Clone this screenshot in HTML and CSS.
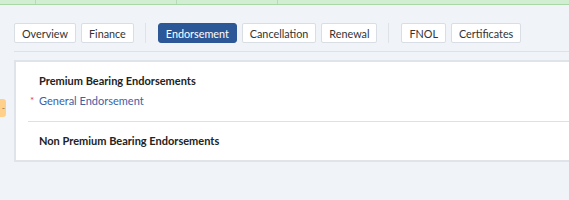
FILE: index.html
```html
<!DOCTYPE html>
<html>
<head>
<meta charset="utf-8">
<link rel="stylesheet" href="styles.css">
</head>
<body>
<div class="topstrip">
  <div class="cell c1"></div>
  <div class="cell c2"></div>
  <div class="cell c3"></div>
  <div class="cell c4"></div>
</div>
<div class="tabs">
  <button class="tab">Overview</button>
  <button class="tab">Finance</button>
  <span class="sep"></span>
  <button class="tab active">Endorsement</button>
  <button class="tab">Cancellation</button>
  <button class="tab">Renewal</button>
  <span class="sep"></span>
  <button class="tab">FNOL</button>
  <button class="tab">Certificates</button>
</div>
<div class="side-tab"><span>-</span></div>
<div class="card">
  <div class="section first">
    <div class="heading">Premium Bearing Endorsements</div>
    <div class="item"><span class="req">*</span><a class="link">General Endorsement</a></div>
  </div>
  <div class="section second">
    <div class="heading">Non Premium Bearing Endorsements</div>
  </div>
</div>
</body>
</html>
```
FILE: styles.css
```css
html, body {
  margin: 0;
  padding: 0;
  background: #f0f4f8;
  overflow: hidden;
  font-family: "Lato", "Noto Sans", sans-serif;
  font-size: 11px;
  color: #2a2a2a;
}
.topstrip {
  display: flex;
  height: 4px;
  background: #d2eed2;
  border-bottom: 1px solid #a8d8a8;
}
.cell { height: 4px; border-right: 1px solid #b5dcb5; }
.c1 { width: 35px; }
.c2 { width: 140px; }
.c3 { width: 100px; }
.c4 { flex: 1; border-right: none; }
.tabs {
  display: flex;
  align-items: center;
  margin: 18px 0 0 14px;
  padding-bottom: 8px;
  border-bottom: 1px solid #dde2e8;
}
.tab {
  height: 20px;
  box-sizing: border-box;
  padding: 0 7px;
  margin: 0 5px 0 0;
  background: #fff;
  border: 1px solid #d9dee4;
  border-radius: 2px;
  font-family: inherit;
  font-size: 10.8px;
  color: #333;
  display: inline-flex;
  align-items: center;
}
.tab.active {
  background: #2c5897;
  border-color: #2c5897;
  color: #fff;
  border-radius: 3px;
}
.sep {
  width: 1px;
  height: 20px;
  background: #dfe3e8;
  margin: 0 12px 0 6px;
}
.side-tab {
  position: absolute;
  left: -6px;
  top: 99px;
  width: 12px;
  height: 18px;
  background: #ffd08a;
  border-radius: 3px;
  color: #9a7a50;
  font-size: 9px;
  line-height: 18px;
  text-align: right;
}
.side-tab span { padding-right: 1px; }
.card {
  margin: 8px -20px 0 14px;
  background: #fff;
  border: 2px solid #dfe3ea;
  padding: 0 0 0 12px;
}
.section { padding-left: 11px; }
.section.first {
  padding-top: 11px;
  padding-bottom: 13px;
  border-bottom: 1px solid #dde1e6;
}
.section.second {
  padding-top: 11px;
  padding-bottom: 12px;
}
.heading {
  font-weight: bold;
  line-height: 15px;
  color: #222;
}
.item {
  position: relative;
  margin-top: 5px;
  line-height: 15px;
}
.req {
  position: absolute;
  left: -9px;
  top: 0;
  color: #e53e3e;
  font-size: 10px;
}
.link { color: #3b62a6; }
```
